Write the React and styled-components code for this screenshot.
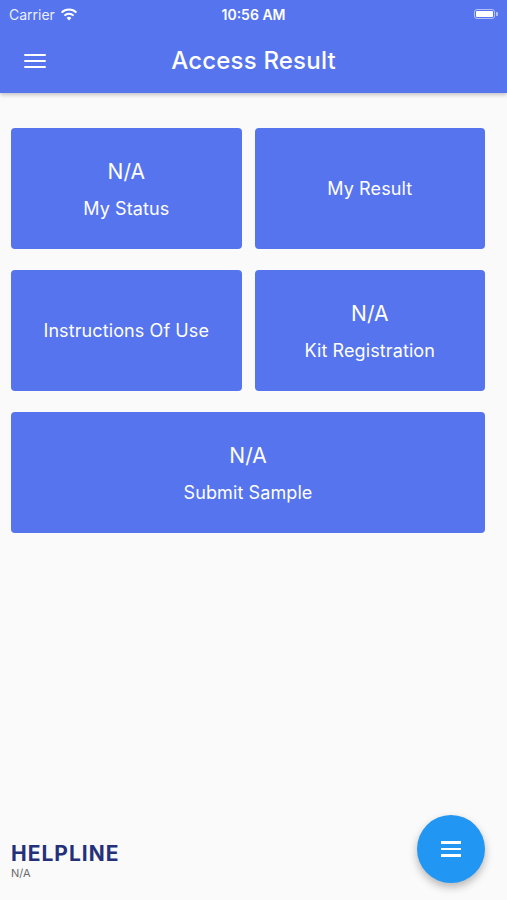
import React from "react";
import styled, { createGlobalStyle } from "styled-components";

const GlobalStyle = createGlobalStyle`
  html, body {
    margin: 0;
    padding: 0;
    background: #fafafa;
    font-family: Inter, "Noto Sans", sans-serif;
  }
`;

const Screen = styled.div`
  width: 507px;
  height: 900px;
  display: flex;
  flex-direction: column;
  background: #fafafa;
  position: relative;
  overflow: hidden;
`;

const Header = styled.header`
  background: #5674ee;
  height: 93px;
  box-shadow: 0 2px 4px rgba(0, 0, 0, 0.22);
  display: flex;
  flex-direction: column;
  color: white;
  position: relative;
  z-index: 1;
`;

const StatusBar = styled.div`
  height: 28px;
  display: grid;
  grid-template-columns: 1fr auto 1fr;
  align-items: center;
  padding: 0 9px;
  font-size: 14px;
  font-weight: 500;
`;

const Carrier = styled.div`
  display: flex;
  align-items: center;
  gap: 5px;
  font-weight: 400;
  color: rgba(255, 255, 255, 0.9);
`;

const Clock = styled.div`
  font-weight: 600;
  font-size: 14px;
`;

const Battery = styled.div`
  justify-self: end;
  display: flex;
  align-items: center;
  gap: 1px;
`;

const BatteryBody = styled.div`
  width: 21px;
  height: 10px;
  border: 1px solid rgba(255, 255, 255, 0.55);
  border-radius: 3px;
  padding: 1px;
  box-sizing: border-box;
  &::after {
    content: "";
    display: block;
    height: 100%;
    background: white;
    border-radius: 1px;
  }
`;

const BatteryTip = styled.div`
  width: 2px;
  height: 4px;
  background: rgba(255, 255, 255, 0.55);
  border-radius: 0 1px 1px 0;
`;

const NavBar = styled.div`
  flex: 1;
  display: flex;
  align-items: center;
  position: relative;
`;

const MenuButton = styled.button`
  border: none;
  background: none;
  padding: 0;
  margin-left: 24px;
  width: 22px;
  display: flex;
  flex-direction: column;
  gap: 4px;
  cursor: pointer;
  & span {
    display: block;
    height: 2px;
    background: white;
    border-radius: 1px;
  }
`;

const Title = styled.h1`
  margin: 0;
  flex: 1;
  text-align: center;
  font-size: 24px;
  font-weight: 500;
  margin-right: 46px;
  letter-spacing: 0.2px;
`;

const Grid = styled.main`
  display: grid;
  grid-template-columns: 1fr 1fr;
  column-gap: 13px;
  row-gap: 21px;
  padding: 35px 22px 0 11px;
`;

const Card = styled.button`
  grid-column: ${(p) => (p.$wide ? "1 / span 2" : "auto")};
  height: 121px;
  border: none;
  border-radius: 4px;
  background: #5674ee;
  color: white;
  font-family: inherit;
  display: flex;
  flex-direction: column;
  align-items: center;
  justify-content: center;
  gap: 14px;
  cursor: pointer;
  padding: 0;
`;

const Value = styled.div`
  font-size: 21px;
  font-weight: 400;
`;

const Label = styled.div`
  font-size: 18px;
  font-weight: 400;
  letter-spacing: 0.1px;
`;

const Footer = styled.footer`
  margin-top: auto;
  display: flex;
  align-items: flex-end;
  justify-content: space-between;
  padding: 0 22px 17px 11px;
`;

const Helpline = styled.div`
  display: flex;
  flex-direction: column;
  padding-bottom: 3px;
`;

const HelpTitle = styled.div`
  font-size: 21px;
  font-weight: 700;
  color: #25307a;
  letter-spacing: 1px;
  line-height: 24px;
`;

const HelpValue = styled.div`
  font-size: 11px;
  color: #6b6b6b;
  line-height: 14px;
`;

const Fab = styled.button`
  width: 68px;
  height: 68px;
  border-radius: 50%;
  border: none;
  background: #2196f3;
  box-shadow: 0 4px 8px rgba(0, 0, 0, 0.28);
  display: flex;
  flex-direction: column;
  align-items: center;
  justify-content: center;
  gap: 4px;
  cursor: pointer;
  & span {
    display: block;
    width: 20px;
    height: 2.5px;
    background: white;
  }
`;

const cards = [
  { value: "N/A", label: "My Status" },
  { label: "My Result" },
  { label: "Instructions Of Use" },
  { value: "N/A", label: "Kit Registration" },
  { value: "N/A", label: "Submit Sample", wide: true },
];

function Wifi() {
  return (
    <svg width="18" height="13" viewBox="0 0 18 13">
      <path d="M9 12.5 L6.6 9.9 A3.6 3.6 0 0 1 11.4 9.9 Z" fill="white" />
      <path d="M4.4 7.6 A6.6 6.6 0 0 1 13.6 7.6" stroke="white" strokeWidth="2" fill="none" />
      <path d="M1.6 4.6 A10.6 10.6 0 0 1 16.4 4.6" stroke="white" strokeWidth="2" fill="none" />
    </svg>
  );
}

export default function App() {
  return (
    <Screen>
      <GlobalStyle />
      <Header>
        <StatusBar>
          <Carrier>
            Carrier <Wifi />
          </Carrier>
          <Clock>10:56 AM</Clock>
          <Battery>
            <BatteryBody />
            <BatteryTip />
          </Battery>
        </StatusBar>
        <NavBar>
          <MenuButton>
            <span />
            <span />
            <span />
          </MenuButton>
          <Title>Access Result</Title>
        </NavBar>
      </Header>
      <Grid>
        {cards.map((c) => (
          <Card key={c.label} $wide={c.wide}>
            {c.value && <Value>{c.value}</Value>}
            <Label>{c.label}</Label>
          </Card>
        ))}
      </Grid>
      <Footer>
        <Helpline>
          <HelpTitle>HELPLINE</HelpTitle>
          <HelpValue>N/A</HelpValue>
        </Helpline>
        <Fab>
          <span />
          <span />
          <span />
        </Fab>
      </Footer>
    </Screen>
  );
}
